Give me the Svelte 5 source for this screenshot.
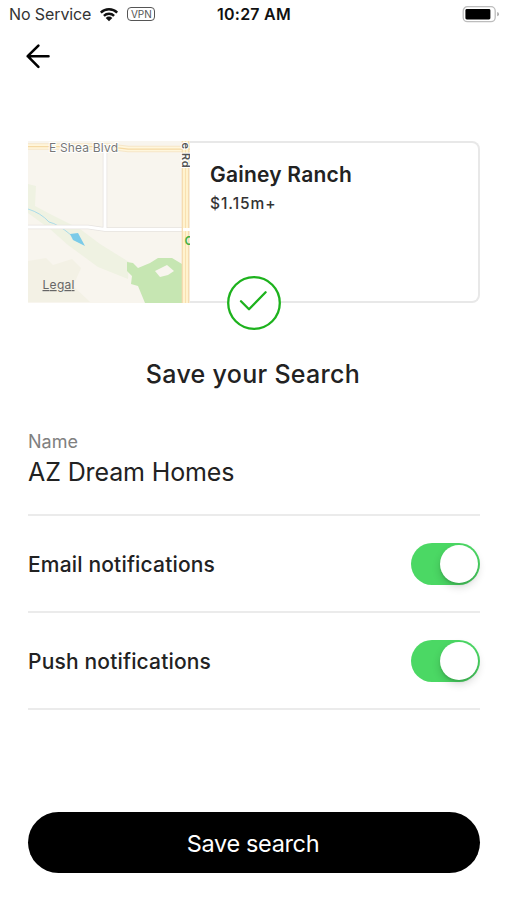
<script>
  let name = 'AZ Dream Homes';

  let notifications = [
    { id: 'email', label: 'Email notifications', enabled: true },
    { id: 'push', label: 'Push notifications', enabled: true }
  ];

  function toggle(item) {
    item.enabled = !item.enabled;
    notifications = notifications;
  }
</script>

<div class="screen">
  <div class="status-bar">
    <div class="carrier">
      <span class="service">No Service</span>
      <svg class="wifi" viewBox="0 0 20 15" width="20" height="15">
        <path d="M1.8 5.6 A11.6 11.6 0 0 1 18.2 5.6" />
        <path d="M4.9 8.8 A7.2 7.2 0 0 1 15.1 8.8" />
        <path class="dot" d="M6.7 10.9 A4.7 4.7 0 0 1 13.3 10.9 L10 14.2 Z" />
      </svg>
      <span class="vpn">VPN</span>
    </div>
    <span class="clock">10:27 AM</span>
    <svg class="battery" viewBox="0 0 38 18" width="38" height="18">
      <rect x="1.2" y="1.7" width="32" height="15" rx="4.2" fill="#fff" stroke="#bdbdbd" stroke-width="1.3" />
      <rect x="3.4" y="4" width="25" height="10.4" rx="1.4" fill="#000" />
      <path d="M35.2 7.1 Q37 7.7 37 9.2 Q37 10.7 35.2 11.3 Z" fill="#aaa" />
    </svg>
  </div>

  <div class="nav">
    <button class="back" aria-label="Back">
      <svg viewBox="0 0 26 26" width="26" height="26">
        <path d="M13.4 2.6 L2.7 13.2 L13.4 23.8 M2.7 13.2 H23.5" />
      </svg>
    </button>
  </div>

  <div class="card">
    <svg class="map" viewBox="0 0 162 162" width="162" height="162">
      <rect width="162" height="162" fill="#f8f5ee" />
      <!-- parks and washes -->
      <path d="M0 43 L8 45 L7 65 L24 74 L52 88 L72 103 L101 121 L100 138 L70 126 L40 104 L22 88 L0 72 Z" fill="#eff2e2" />
      <path d="M0 120 L18 117 L25 124 L44 118 L53 127 L45 145 L62 161 L0 161 Z" fill="#f3f1e5" />
      <path d="M99 121 L105 122 L110 127 L122 122 L130 117 L144 117 L154 123 L154 162 L117 162 L110 145 L103 143 L104 135 L99 130 Z" fill="#c6e6b2" />
      <path d="M127 130 L139 124 L146 130 L140 134 L132 136 Z" fill="#f8f5ee" />
      <path d="M0 68 Q13 72 21 81 Q30 83 43 94" fill="none" stroke="#aadbea" stroke-width="1" />
      <path d="M42 93 L50 92 L57 105 L45 99 Z" fill="#7bcbe8" />
      <!-- minor roads -->
      <path d="M77 10 V88 M0 86 H60 L77 88.5 H157" fill="none" stroke="#e6e3e0" stroke-width="4.6" />
      <path d="M77 10 V88 M0 86 H60 L77 88.5 H157" fill="none" stroke="#fff" stroke-width="3" />
      <!-- main roads -->
      <path d="M0 5.5 H80 L100 8 H162" fill="none" stroke="#f6e6c8" stroke-width="6.6" />
      <path d="M0 5.5 H80 L100 8 H162" fill="none" stroke="#fff6dc" stroke-width="4.4" />
      <path d="M0 5.7 H80 L100 8.2 H162" fill="none" stroke="#f5d9a4" stroke-width="1.3" />
      <path d="M157.5 0 V162" fill="none" stroke="#f4d6aa" stroke-width="7.6" />
      <path d="M157.5 0 V162" fill="none" stroke="#fff3cf" stroke-width="5.4" />
      <path d="M157.5 0 V162" fill="none" stroke="#f9e0b0" stroke-width="1" />
      <path d="M155 88.5 H162" stroke="#fff" stroke-width="3" />
      <text class="road" x="21" y="10.5" textLength="69">E Shea Blvd</text>
      <text class="road-side" transform="translate(153.8 1.5) rotate(90)" textLength="25">e Rd</text>
      <text class="poi" x="156.5" y="103.5">C</text>
      <text class="legal" x="14.5" y="148" textLength="32">Legal</text>
    </svg>
    <div class="details">
      <div class="area">Gainey Ranch</div>
      <div class="price">$1.15m+</div>
    </div>
    <svg class="check" viewBox="0 0 54 54" width="54" height="54">
      <circle cx="27" cy="27" r="25.8" />
      <path d="M14 25.2 L22 33.2 L38.6 16.2" />
    </svg>
  </div>

  <h1>Save your Search</h1>

  <div class="field">
    <label for="name">Name</label>
    <input id="name" type="text" bind:value={name} />
  </div>

  {#each notifications as item (item.id)}
    <div class="row">
      <span class="row-label">{item.label}</span>
      <button
        class="switch"
        class:on={item.enabled}
        role="switch"
        aria-checked={item.enabled}
        aria-label={item.label}
        on:click={() => toggle(item)}
      >
        <span class="knob"></span>
      </button>
    </div>
  {/each}

  <button class="save">Save search</button>
</div>

<style>
  :global(body) {
    background: #fff;
  }

  .screen {
    box-sizing: border-box;
    display: flex;
    flex-direction: column;
    width: 506px;
    height: 900px;
    padding: 0 26px 0 28px;
    background: #fff;
    color: #222;
    font-family: Inter, 'Liberation Sans', sans-serif;
  }

  button {
    border: none;
    cursor: pointer;
    font-family: inherit;
  }

  .status-bar {
    display: grid;
    grid-template-columns: 1fr auto 1fr;
    align-items: center;
    height: 28px;
    margin: 0 -19px 0 -19px;
  }

  .carrier {
    display: flex;
    align-items: center;
  }

  .service {
    color: #333;
    font-size: 16px;
    letter-spacing: -0.1px;
    white-space: nowrap;
  }

  .wifi {
    margin-left: 8px;
    fill: none;
    stroke: #111;
    stroke-width: 2.4;
  }

  .wifi .dot {
    fill: #111;
    stroke: none;
  }

  .vpn {
    box-sizing: border-box;
    width: 28px;
    height: 14px;
    margin-left: 8px;
    border: 1.3px solid #555;
    border-radius: 4px;
    color: #555;
    font-size: 10px;
    line-height: 12px;
    text-align: center;
  }

  .clock {
    color: #111;
    font-size: 16px;
    font-weight: 600;
    letter-spacing: 0.25px;
  }

  .battery {
    justify-self: end;
    margin-right: -1px;
  }

  .nav {
    height: 113px;
  }

  .back {
    display: block;
    margin: 15px 0 0 -3px;
    padding: 0;
    background: none;
  }

  .back svg {
    display: block;
    fill: none;
    stroke: #000;
    stroke-width: 2.6;
    stroke-linecap: round;
    stroke-linejoin: round;
  }

  .card {
    position: relative;
    box-sizing: border-box;
    display: flex;
    height: 162px;
    border: 2px solid #e8e8e8;
    border-left: none;
    border-radius: 0 8px 8px 0;
  }

  .map {
    flex: none;
    margin: -2px 0;
    font-family: Inter, 'Liberation Sans', sans-serif;
  }

  .road {
    fill: #777;
    font-size: 12px;
    stroke: #fff;
    stroke-width: 2px;
    paint-order: stroke;
  }

  .road-side {
    fill: #555;
    font-size: 11px;
    font-weight: 600;
    stroke: #fff;
    stroke-width: 2px;
    paint-order: stroke;
  }

  .poi {
    fill: #45b045;
    font-size: 12px;
    font-weight: 600;
  }

  .legal {
    fill: #666;
    font-size: 12px;
    text-decoration: underline;
  }

  .details {
    padding: 18px 0 0 20px;
  }

  .area {
    font-size: 21px;
    font-weight: 600;
    letter-spacing: 0.22px;
    line-height: 27px;
  }

  .price {
    margin-top: 5px;
    color: #333;
    font-size: 15.5px;
    font-weight: 500;
    letter-spacing: 0.95px;
    line-height: 21px;
  }

  .check {
    position: absolute;
    left: 198.5px;
    bottom: -29px;
    fill: none;
    stroke: #1db21d;
    stroke-width: 2.3;
    stroke-linecap: round;
    stroke-linejoin: round;
  }

  .check circle {
    fill: #fff;
  }

  h1 {
    margin: 55px 2px 0 0;
    font-size: 25px;
    font-weight: 500;
    letter-spacing: 0.3px;
    line-height: 32px;
    text-align: center;
  }

  .field {
    box-sizing: border-box;
    height: 126px;
    padding-top: 41px;
    border-bottom: 2px solid #ebebeb;
  }

  label {
    display: block;
    color: #808080;
    font-size: 18px;
    line-height: 22px;
  }

  input {
    display: block;
    width: 100%;
    height: 32px;
    margin-top: 3px;
    padding: 0;
    border: none;
    outline: none;
    background: none;
    color: #222;
    font-family: inherit;
    font-size: 25px;
    letter-spacing: -0.12px;
  }

  .row {
    box-sizing: border-box;
    display: flex;
    align-items: center;
    justify-content: space-between;
    height: 97px;
    border-bottom: 2px solid #ebebeb;
  }

  .row-label {
    padding-top: 1px;
    font-size: 21px;
    font-weight: 500;
    letter-spacing: 0.17px;
  }

  .switch {
    box-sizing: border-box;
    display: flex;
    width: 69px;
    height: 42px;
    padding: 2px;
    border-radius: 21px;
    background: #e5e5e5;
  }

  .switch.on {
    justify-content: flex-end;
    background: #4bd864;
  }

  .knob {
    width: 38px;
    height: 38px;
    border-radius: 50%;
    background: #fff;
    box-shadow: 0 4px 8px rgba(0, 0, 0, 0.16), 0 2px 2px rgba(0, 0, 0, 0.1);
  }

  .save {
    height: 61px;
    margin-top: 102px;
    padding: 2px 2px 0 0;
    border-radius: 31px;
    background: #000;
    color: #fff;
    font-size: 23.5px;
    letter-spacing: -0.35px;
  }
</style>
